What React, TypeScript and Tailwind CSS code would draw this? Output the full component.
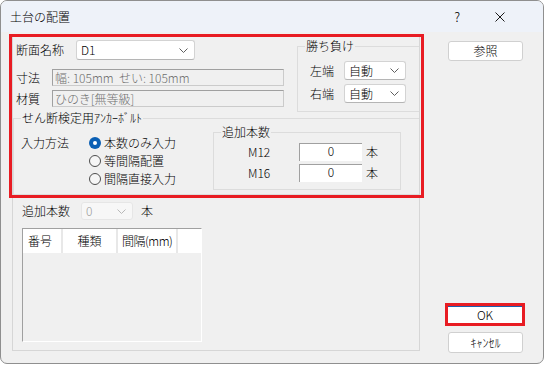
import React from "react";

const Chevron = ({ color = "#5f5f5f" }: { color?: string }) => (
  <svg width="9" height="5" viewBox="0 0 9 5" className="shrink-0">
    <path d="M0.5 0.5 L4.5 4.5 L8.5 0.5" fill="none" stroke={color} strokeWidth="1" />
  </svg>
);

const Combo = ({ text, className }: { text: string; className: string }) => (
  <div className={`flex items-center justify-between bg-white border border-[#d3d3d3] border-b-[#b5b5b5] rounded-[3px] pl-[4px] pr-[6px] ${className}`}>
    <span>{text}</span>
    <Chevron />
  </div>
);

const Group = ({ title, className, children }: { title: string; className: string; children?: React.ReactNode }) => (
  <div className={`relative border border-[#dcdcdc] ${className}`}>
    <span className="absolute top-[-8px] left-[7px] px-[1px] bg-[#f0f0f0] whitespace-nowrap">{title}</span>
    {children}
  </div>
);

const Radio = ({ label, checked }: { label: string; checked?: boolean }) => (
  <div className="flex items-center h-[18px]">
    {checked ? (
      <span className="w-[12px] h-[12px] rounded-full bg-[#0a5fb4] flex items-center justify-center">
        <span className="w-[4px] h-[4px] rounded-full bg-white" />
      </span>
    ) : (
      <span className="w-[12px] h-[12px] rounded-full border border-[#4e4e4e] bg-[#f6f6f6]" />
    )}
    <span className="ml-[3px]">{label}</span>
  </div>
);

const ReadOnlyField = ({ text }: { text: string }) => (
  <div className="w-[232px] h-[17px] flex items-center pl-[2px] whitespace-pre border border-[#cbcbcb] border-t-[#a0a0a0] border-l-[#a0a0a0] text-[#6f6f6f]">
    {text}
  </div>
);

const CountInput = ({ label }: { label: string }) => (
  <div className="flex items-center h-[18px]">
    <span className="w-[85px] pl-[34px]">{label}</span>
    <div className="w-[63px] h-[18px] bg-white border-t border-l border-[#a0a0a0] flex items-start justify-center">0</div>
    <span className="ml-[4px]">本</span>
  </div>
);

export default function App() {
  return (
    <div className="w-[545px] h-[365px] bg-white font-['Noto_Sans_CJK_JP',sans-serif] font-light text-[12px] leading-[14px] text-black">
      <div className="relative w-[544px] h-[364px] border border-[#8f8f8f] rounded-[7px] overflow-hidden flex flex-col bg-[#f0f0f0]">
        {/* title bar */}
        <div className="h-[31px] shrink-0 bg-[#eef2f9] flex items-center">
          <span className="ml-[9px]">土台の配置</span>
          <span className="ml-auto text-[13px]">?</span>
          <svg width="10" height="10" viewBox="0 0 10 10" className="ml-[35px] mr-[38px]">
            <path d="M0.5 0.5 L9.5 9.5 M9.5 0.5 L0.5 9.5" stroke="#1a1a1a" strokeWidth="1" />
          </svg>
        </div>

        <div className="flex-1 flex">
          <div className="pl-[11px] pt-[4px]">
            <div className="w-[408px] h-[315px] border border-[#d6d6d6] flex flex-col">
              {/* section, size, material + win/lose */}
              <div className="flex h-[75px]">
                <div className="w-[284px] flex flex-col">
                  <div className="mt-[3px] flex items-center h-[20px]">
                    <span className="w-[63px] pl-[3px]">断面名称</span>
                    <Combo text="D1" className="w-[119px] h-[20px]" />
                  </div>
                  <div className="mt-[9px] flex items-center h-[17px]">
                    <span className="w-[39px] pl-[3px]">寸法</span>
                    <ReadOnlyField text="幅: 105mm  せい: 105mm" />
                  </div>
                  <div className="mt-[4px] flex items-center h-[17px]">
                    <span className="w-[39px] pl-[3px]">材質</span>
                    <ReadOnlyField text="ひのき[無等級]" />
                  </div>
                </div>
                <Group title="勝ち負け" className="flex-1 mt-[9px] h-[66px] border-r-0">
                  <div className="mt-[14px] flex items-center">
                    <span className="w-[46px] pl-[12px]">左端</span>
                    <Combo text="自動" className="w-[62px] h-[19px]" />
                  </div>
                  <div className="mt-[4px] flex items-center">
                    <span className="w-[46px] pl-[12px]">右端</span>
                    <Combo text="自動" className="w-[62px] h-[19px]" />
                  </div>
                </Group>
              </div>

              {/* anchor bolts */}
              <Group title="せん断検定用ｱﾝｶｰﾎﾞﾙﾄ" className="mt-[6px] h-[77px] border-r-0 flex items-start">
                <div className="mt-[15px] flex items-start">
                  <div className="w-[75px] pl-[7px] h-[18px] flex items-center">入力方法</div>
                  <div className="w-[124px] flex flex-col">
                    <Radio label="本数のみ入力" checked />
                    <Radio label="等間隔配置" />
                    <Radio label="間隔直接入力" />
                  </div>
                </div>
                <Group title="追加本数" className="mt-[13px] w-[188px] h-[58px]">
                  <div className="mt-[10px]">
                    <CountInput label="M12" />
                  </div>
                  <div className="mt-[3px]">
                    <CountInput label="M16" />
                  </div>
                </Group>
              </Group>

              {/* extra count + list */}
              <div className="mt-[7px] flex items-center h-[18px]">
                <span className="w-[68px] pl-[9px]">追加本数</span>
                <div className="w-[52px] h-[18px] flex items-center justify-between pl-[4px] pr-[6px] bg-[#f7f7f7] border border-[#e6e6e6] rounded-[3px] text-[#9a9a9a]">
                  <span>0</span>
                  <Chevron color="#b8b8b8" />
                </div>
                <span className="ml-[8px]">本</span>
              </div>
              <div className="mt-[8px] ml-[9px] w-[180px] h-[114px] bg-[#f0f0f0] border border-t-[#a0a0a0] border-l-[#a0a0a0] border-r-white border-b-white">
                <div className="flex h-[24px] bg-white whitespace-nowrap">
                  <div className="w-[40px] pl-[5px] flex items-center border-r-2 border-[#e8e8e8]">番号</div>
                  <div className="w-[55px] flex items-center justify-center border-r-2 border-[#e8e8e8]">種類</div>
                  <div className="w-[60px] pl-[4px] flex items-center border-r-2 border-[#e8e8e8] tracking-[-0.5px] overflow-hidden">間隔(mm)</div>
                  <div className="flex-1" />
                </div>
              </div>
            </div>
          </div>

          {/* buttons */}
          <div className="flex flex-col pl-[28px] pt-[9px]">
            <button className="w-[75px] h-[20px] bg-white border border-[#d0d0d0] rounded-[3px] flex items-center justify-center">参照</button>
            <div className="mt-[242px] -ml-[3px] w-[80px] h-[23px] border-[3px] border-[#e81c23] flex">
              <button className="flex-1 bg-white border-t border-[#1d5fae] flex items-center justify-center">OK</button>
            </div>
            <button className="mt-[6px] w-[75px] h-[21px] bg-white border border-[#d0d0d0] rounded-[3px] flex items-center justify-center">ｷｬﾝｾﾙ</button>
          </div>
        </div>

        {/* highlight */}
        <div className="absolute left-[8px] top-[33px] w-[415px] h-[164px] border-[3px] border-[#e81c23] pointer-events-none" />
      </div>
    </div>
  );
}
